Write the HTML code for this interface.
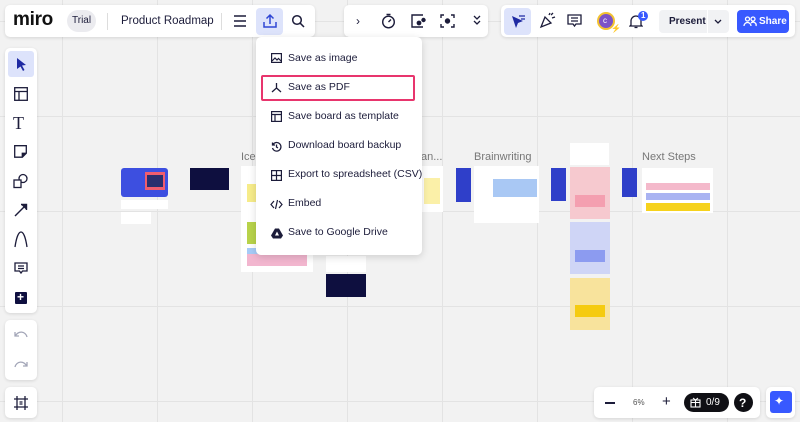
<!DOCTYPE html>
<html><head><meta charset="utf-8"><style>
*{box-sizing:border-box;margin:0;padding:0}
body{width:800px;height:422px;overflow:hidden;position:relative;font-family:"Liberation Sans",sans-serif;color:#1c1c3a;
background-color:#f2f2f2;
background-image:linear-gradient(#e3e3e3 1px,transparent 1px),linear-gradient(90deg,#e3e3e3 1px,transparent 1px);
background-size:95px 95px;background-position:62px 21px}
.p{position:absolute;background:#fff;border-radius:5px;box-shadow:0 1px 3px rgba(0,0,0,.12)}
.a{position:absolute}
.t{position:absolute;font-size:11px;white-space:nowrap}
svg{position:absolute}
.mi{position:absolute;left:32px;font-size:10.5px;color:#1c1c3a;white-space:nowrap}
.b{position:absolute}
</style></head><body>

<!-- canvas content -->
<div class="b" style="left:121px;top:168px;width:47px;height:29px;background:#3d4fe0;border-radius:3px"></div>
<div class="b" style="left:145px;top:172px;width:20px;height:18px;background:#f05d6e"></div>
<div class="b" style="left:147px;top:175px;width:16px;height:12px;background:#2a2f6e"></div>
<div class="b" style="left:121px;top:200px;width:47px;height:9px;background:#fff"></div>
<div class="b" style="left:121px;top:212px;width:30px;height:12px;background:#fff"></div>
<div class="b" style="left:190px;top:168px;width:39px;height:22px;background:#0e0f3f"></div>
<div class="t" style="left:241px;top:151px;color:#777;font-size:11px">Iceb</div>
<div class="b" style="left:241px;top:166px;width:72px;height:106px;background:#fff"></div>
<div class="b" style="left:247px;top:184px;width:14px;height:18px;background:#f7ec8a"></div>
<div class="b" style="left:247px;top:222px;width:14px;height:22px;background:#b8d34a"></div>
<div class="b" style="left:247px;top:248px;width:14px;height:18px;background:#a6cbf7"></div>
<div class="b" style="left:247px;top:254px;width:60px;height:12px;background:#f2b6cf"></div>
<div class="t" style="left:421px;top:151px;color:#777">an...</div>
<div class="b" style="left:421px;top:166px;width:22px;height:46px;background:#fff"></div>
<div class="b" style="left:424px;top:178px;width:16px;height:26px;background:#fbf0a8"></div>
<div class="b" style="left:326px;top:256px;width:40px;height:16px;background:#fff"></div>
<div class="b" style="left:326px;top:274px;width:40px;height:23px;background:#0e0f3f"></div>
<div class="t" style="left:474px;top:151px;color:#777">Brainwriting</div>
<div class="b" style="left:456px;top:168px;width:15px;height:34px;background:#2f3fc9"></div>
<div class="b" style="left:474px;top:166px;width:65px;height:57px;background:#fff"></div>
<div class="b" style="left:493px;top:179px;width:44px;height:18px;background:#a9c8f4"></div>
<div class="b" style="left:551px;top:168px;width:15px;height:33px;background:#2f3fc9"></div>
<div class="b" style="left:570px;top:143px;width:39px;height:22px;background:#fff"></div>
<div class="b" style="left:570px;top:167px;width:40px;height:52px;background:#f6c9cf"></div>
<div class="b" style="left:570px;top:222px;width:40px;height:52px;background:#cfd5f6"></div>
<div class="b" style="left:570px;top:278px;width:40px;height:52px;background:#f8e39c"></div>
<div class="b" style="left:575px;top:195px;width:30px;height:12px;background:#f49fb0"></div>
<div class="b" style="left:575px;top:250px;width:30px;height:12px;background:#8c9bf0"></div>
<div class="b" style="left:575px;top:305px;width:30px;height:12px;background:#f5cb10"></div>
<div class="b" style="left:622px;top:168px;width:15px;height:29px;background:#2f3fc9"></div>
<div class="t" style="left:642px;top:151px;color:#777">Next Steps</div>
<div class="b" style="left:642px;top:168px;width:71px;height:45px;background:#fff"></div>
<div class="b" style="left:646px;top:183px;width:64px;height:7px;background:#f4b9cb"></div>
<div class="b" style="left:646px;top:193px;width:64px;height:7px;background:#a9b3f2"></div>
<div class="b" style="left:646px;top:203px;width:64px;height:8px;background:#f6d21c"></div>

<!-- top bar 1 -->
<div class="p" style="left:5px;top:5px;width:310px;height:32px"></div>
<div class="t" style="left:13px;top:9px;font-size:19px;font-weight:bold;letter-spacing:-0.3px;color:#111">miro</div>
<div class="a" style="left:67px;top:10px;width:29px;height:22px;border-radius:11px;background:#ebebef"></div>
<div class="t" style="left:72px;top:15px;font-size:10px">Trial</div>
<div class="a" style="left:107px;top:13px;width:1px;height:17px;background:#ddd"></div>
<div class="t" style="left:121px;top:15px;font-size:11.5px">Product Roadmap</div>
<div class="a" style="left:221px;top:13px;width:1px;height:17px;background:#ddd"></div>
<svg style="left:233px;top:14px" width="14" height="14" viewBox="0 0 14 14"><path d="M1 2h12M1 7h12M1 12h12" stroke="#1c1c3a" stroke-width="1.4"/></svg>
<div class="a" style="left:256px;top:8px;width:27px;height:27px;border-radius:4px;background:#dde3fb"></div>
<svg style="left:262px;top:13px" width="16" height="16" viewBox="0 0 16 16" fill="none" stroke="#2f46d4" stroke-width="1.5"><path d="M8 11V2M4.5 5.5L8 2l3.5 3.5M2 9v5h12V9"/></svg>
<svg style="left:291px;top:14px" width="14" height="14" viewBox="0 0 14 14" fill="none" stroke="#1c1c3a" stroke-width="1.5"><circle cx="6" cy="6" r="4.3"/><path d="M9.2 9.2L13 13"/></svg>

<!-- top bar 2 -->
<div class="p" style="left:344px;top:5px;width:144px;height:32px"></div>
<div class="t" style="left:356px;top:14px;font-size:12px">›</div>
<svg style="left:381px;top:13px" width="15" height="16" viewBox="0 0 15 16" fill="none" stroke="#1c1c3a" stroke-width="1.4"><circle cx="7.5" cy="9" r="5.8"/><path d="M5.5 1.5h4M7.5 9l2.5-2.5"/></svg>
<svg style="left:411px;top:14px" width="15" height="14" viewBox="0 0 15 14" fill="none" stroke="#1c1c3a" stroke-width="1.4"><path d="M12 1H1v12h11"/><circle cx="8" cy="9" r="1.7" fill="#1c1c3a"/><circle cx="12.5" cy="6" r="1.5" fill="#1c1c3a"/></svg>
<svg style="left:440px;top:14px" width="15" height="14" viewBox="0 0 15 14" fill="none" stroke="#1c1c3a" stroke-width="1.4"><path d="M1 4V1h3M11 1h3v3M14 10v3h-3M4 13H1v-3"/><circle cx="7.5" cy="7" r="2" fill="#1c1c3a"/></svg>
<svg style="left:473px;top:15px" width="8" height="11" viewBox="0 0 8 11" fill="none" stroke="#1c1c3a" stroke-width="1.3"><path d="M1 1l3 3 3-3M1 6l3 3 3-3"/></svg>

<!-- top bar 3 -->
<div class="p" style="left:501px;top:5px;width:294px;height:32px"></div>
<div class="a" style="left:504px;top:8px;width:27px;height:27px;border-radius:4px;background:#dde3fb"></div>
<svg style="left:510px;top:13px" width="16" height="16" viewBox="0 0 16 16"><path d="M2 3l4 12 2-5 5-2z" fill="#1f2aa3"/><path d="M9 3h6M11 6h4" stroke="#1f2aa3" stroke-width="1.3"/></svg>
<svg style="left:539px;top:12px" width="17" height="17" viewBox="0 0 17 17" fill="none" stroke="#1c1c3a" stroke-width="1.3"><path d="M2 15l4-10 6 6z"/><path d="M10 3l1-2M13 6l3-1M12 3l2-2"/></svg>
<svg style="left:567px;top:14px" width="15" height="14" viewBox="0 0 15 14" fill="none" stroke="#1c1c3a" stroke-width="1.3"><path d="M1 1h13v9H9l-1.5 2L6 10H1z"/><path d="M4 4h7M4 7h7"/></svg>
<div class="a" style="left:597px;top:12px;width:18px;height:18px;border-radius:50%;background:#7b52c7;border:2px solid #f2c231"></div>
<div class="t" style="left:603px;top:16px;color:#fff;font-size:8px">c</div>
<div class="t" style="left:611px;top:24px;color:#f2c231;font-size:8px">⚡</div>
<svg style="left:629px;top:14px" width="14" height="15" viewBox="0 0 14 15" fill="none" stroke="#1c1c3a" stroke-width="1.3"><path d="M2 11V7a5 5 0 0 1 10 0v4l1 1H1zM5.5 13.5h3"/></svg>
<div class="a" style="left:638px;top:11px;width:10px;height:10px;border-radius:50%;background:#3859ff"></div>
<div class="t" style="left:641px;top:11px;color:#fff;font-size:8px;font-weight:bold">1</div>
<div class="a" style="left:659px;top:10px;width:70px;height:23px;border-radius:4px;background:#f1f2f4"></div>
<div class="a" style="left:707px;top:10px;width:1px;height:23px;background:#fff"></div>
<div class="t" style="left:669px;top:16px;font-size:10px;font-weight:bold">Present</div>
<svg style="left:714px;top:19px" width="8" height="6" viewBox="0 0 8 6" fill="none" stroke="#1c1c3a" stroke-width="1.3"><path d="M1 1l3 3 3-3"/></svg>
<div class="a" style="left:737px;top:10px;width:52px;height:23px;border-radius:4px;background:#3859ff"></div>
<svg style="left:743px;top:16px" width="14" height="11" viewBox="0 0 14 11" fill="none" stroke="#fff" stroke-width="1.3"><circle cx="4.5" cy="3" r="2"/><circle cx="10" cy="3" r="2"/><path d="M1 10a3.5 3.5 0 0 1 7 0M8 7a3 3 0 0 1 5 3"/></svg>
<div class="t" style="left:759px;top:16px;font-size:10px;font-weight:bold;color:#fff">Share</div>

<!-- dropdown -->
<div class="p" style="left:256px;top:37px;width:166px;height:218px;box-shadow:0 2px 8px rgba(0,0,0,.15)">
 <svg style="left:15px;top:16px" width="11" height="10" viewBox="0 0 11 10" fill="none" stroke="#1c1c3a" stroke-width="1.2"><rect x=".6" y=".6" width="9.8" height="8.8"/><path d="M1 8l3-3 2 2 1.5-1.5L10 8"/></svg>
 <div class="mi" style="top:15px">Save as image</div>
 <div class="a" style="left:5px;top:38px;width:154px;height:26px;border:2.5px solid #e8356d;border-radius:2px"></div>
 <svg style="left:15px;top:45px" width="11" height="11" viewBox="0 0 11 11" fill="none" stroke="#1c1c3a" stroke-width="1.3"><path d="M5.5 1v5L1 10M5.5 6L10 10"/></svg>
 <div class="mi" style="top:44px">Save as PDF</div>
 <svg style="left:15px;top:74px" width="11" height="11" viewBox="0 0 11 11" fill="none" stroke="#1c1c3a" stroke-width="1.2"><rect x=".6" y=".6" width="9.8" height="9.8"/><path d="M1 3.5h9M4 3.5V10"/></svg>
 <div class="mi" style="top:73px">Save board as template</div>
 <svg style="left:15px;top:104px" width="11" height="11" viewBox="0 0 11 11" fill="none" stroke="#1c1c3a" stroke-width="1.3"><path d="M2 3.5A4.3 4.3 0 1 1 1.5 7M1.5 1.5v2.5h2.5M5.5 3.5v2.5l1.5 1"/></svg>
 <div class="mi" style="top:102px">Download board backup</div>
 <svg style="left:15px;top:133px" width="11" height="11" viewBox="0 0 11 11" fill="none" stroke="#1c1c3a" stroke-width="1.2"><rect x=".6" y=".6" width="9.8" height="9.8"/><path d="M1 5.5h9M5.5 1v9"/></svg>
 <div class="mi" style="top:131px">Export to spreadsheet (CSV)</div>
 <svg style="left:14px;top:162px" width="13" height="11" viewBox="0 0 13 11" fill="none" stroke="#1c1c3a" stroke-width="1.2"><path d="M4 2L1 5.5 4 9M9 2l3 3.5L9 9M7.5 1l-2 9"/></svg>
 <div class="mi" style="top:160px">Embed</div>
 <svg style="left:15px;top:191px" width="12" height="11" viewBox="0 0 12 11"><path d="M4 0.5h4l4 7-2 3H2l-2-3z" fill="#1c1c3a"/><path d="M6 3.5l-2 4h4z" fill="#fff"/></svg>
 <div class="mi" style="top:189px">Save to Google Drive</div>
</div>

<!-- left toolbar -->
<div class="p" style="left:5px;top:48px;width:32px;height:265px"></div>
<div class="a" style="left:8px;top:51px;width:26px;height:26px;border-radius:3px;background:#dde3fb"></div>
<svg style="left:16px;top:57px" width="11" height="14" viewBox="0 0 11 14"><path d="M1 1l9 7-4 .5 2.5 4.5-1.5 1-2.5-4.5L1 12z" fill="#1f2aa3"/></svg>
<svg style="left:14px;top:87px" width="14" height="14" viewBox="0 0 14 14" fill="none" stroke="#1c1c3a" stroke-width="1.3"><rect x=".7" y=".7" width="12.6" height="12.6"/><path d="M1 4.5h12M5 4.5V13"/></svg>
<div class="t" style="left:13px;top:113px;font-size:18px;font-family:'Liberation Serif',serif">T</div>
<svg style="left:14px;top:145px" width="13" height="13" viewBox="0 0 13 13" fill="none" stroke="#1c1c3a" stroke-width="1.3"><path d="M.7.7h11.6v7.5l-4 4H.7z"/><path d="M8.3 12.2V8.3h4" fill="#1c1c3a"/></svg>
<svg style="left:13px;top:173px" width="16" height="16" viewBox="0 0 16 16" fill="none" stroke="#1c1c3a" stroke-width="1.3"><circle cx="10" cy="5.5" r="4"/><rect x="1" y="7" width="7" height="7.5" fill="#fff"/></svg>
<svg style="left:14px;top:203px" width="14" height="14" viewBox="0 0 14 14" fill="none" stroke="#1c1c3a" stroke-width="1.4"><path d="M1 13L12 2"/><path d="M7 1.5h5.5V7" fill="#1c1c3a"/></svg>
<svg style="left:14px;top:231px" width="14" height="17" viewBox="0 0 14 17" fill="none" stroke="#1c1c3a" stroke-width="1.3"><path d="M1 16C2 9 4 1 7 1s5 8 6 15"/></svg>
<svg style="left:14px;top:262px" width="14" height="13" viewBox="0 0 14 13" fill="none" stroke="#1c1c3a" stroke-width="1.3"><path d="M1 1h12v8H8.5L7 11 5.5 9H1z"/><path d="M4 4h6M4 6.5h6"/></svg>
<div class="a" style="left:15px;top:292px;width:12px;height:12px;background:#0e0f3f;border-radius:1px"></div>
<div class="t" style="left:17px;top:290px;color:#fff;font-size:12px;font-weight:bold">+</div>

<div class="p" style="left:5px;top:320px;width:32px;height:60px"></div>
<svg style="left:14px;top:331px" width="14" height="8" viewBox="0 0 14 8" fill="none" stroke="#a3a6b8" stroke-width="1.3"><path d="M1 1v4h4M1.5 5A6 6 0 0 1 13 6"/></svg>
<svg style="left:14px;top:361px" width="14" height="8" viewBox="0 0 14 8" fill="none" stroke="#a3a6b8" stroke-width="1.3"><path d="M13 1v4H9M12.5 5A6 6 0 0 0 1 6"/></svg>

<div class="p" style="left:5px;top:387px;width:32px;height:31px"></div>
<svg style="left:14px;top:396px" width="14" height="14" viewBox="0 0 14 14" fill="none" stroke="#1c1c3a" stroke-width="1.3"><path d="M3 0v14M11 0v14M0 3h14M0 11h14M5.5 6h3M5.5 8h3"/></svg>

<!-- bottom right -->
<div class="p" style="left:594px;top:387px;width:166px;height:31px"></div>
<div class="a" style="left:605px;top:402px;width:10px;height:1.5px;background:#1c1c3a"></div>
<div class="t" style="left:633px;top:398px;font-size:8px;color:#555">6%</div>
<div class="t" style="left:662px;top:393px;font-size:15px">+</div>
<div class="a" style="left:684px;top:393px;width:45px;height:19px;border-radius:10px;background:#0f0f14"></div>
<svg style="left:690px;top:397px" width="11" height="11" viewBox="0 0 11 11" fill="none" stroke="#fff" stroke-width="1.1"><rect x="1" y="3" width="9" height="7"/><path d="M1 5.5h9M5.5 3v7M3 1l2.5 2L8 1"/></svg>
<div class="t" style="left:706px;top:397px;font-size:10px;color:#fff">0/9</div>
<div class="a" style="left:734px;top:393px;width:19px;height:19px;border-radius:50%;background:#0f0f14"></div>
<div class="t" style="left:739px;top:396px;font-size:12px;color:#fff;font-weight:bold">?</div>
<div class="p" style="left:766px;top:387px;width:29px;height:31px"></div>
<div class="a" style="left:770px;top:391px;width:22px;height:22px;border-radius:3px;background:#3859ff"></div>
<div class="t" style="left:774px;top:394px;font-size:12px;color:#fff">✦</div>
</body></html>
